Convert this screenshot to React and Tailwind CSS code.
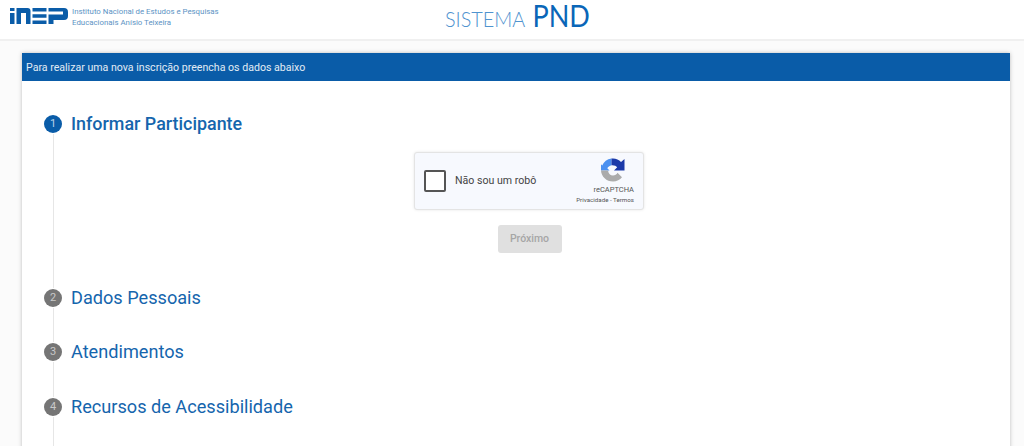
import { useState } from "react";

function InepLogo() {
  return (
    <svg width="58" height="16" viewBox="0 0 58 16" className="block" fill="#0a5ca8">
      <rect x="0" y="0" width="4.500" height="3" />
      <rect x="0" y="5" width="4.500" height="11" />
      <path d="M6.500 0h11a3 3 0 0 1 3 3v13h-4.500V5h-5v11H6.500z" />
      <path d="M22.500 0h14v3.500h-14zM22.500 6.300h14v3.400h-14zM22.500 12.500h14V16h-14z" />
      <path d="M38.500 0h15.500a4 4 0 0 1 4 4v4a4 4 0 0 1-4 4H43.500v4h-5V6.500h14.500v-3H38.500z" />
    </svg>
  );
}

function RecaptchaLogo() {
  return (
    <svg width="24" height="24" viewBox="0 0 24 24" className="block">
      <path d="M10.500 0.500C6 1.200 2.800 3.800 1.200 7.500L0 6.300V12.500h8.500L6.300 10.300c.8-1.400 2.200-2.600 4.200-3z" fill="#4a90f0" />
      <path d="M10.500 0.500h1.500c3.200 0 6 1.300 8 3.500L23.500 1v11.500H13l3.200-3.200c-1.200-1.500-3.200-2.300-5.700-2z" fill="#1c3aa9" />
      <path d="M0 12.500c0.300 6.200 5.500 11 12 11 3.800 0 7-1.500 9-4.200l-4.500-4.500c-1 1.700-2.500 2.700-4.500 2.700-2.700 0-4.500-1.800-5-5z" fill="#ababab" />
    </svg>
  );
}

function StepTitle({ n, active, title }) {
  return (
    <div className="flex h-5 items-center gap-[9px]">
      <div className={`flex h-[18px] w-[18px] shrink-0 items-center justify-center rounded-full text-[11px] ${active ? "bg-[#0a5ca8] text-[#bcd3e8]" : "bg-[#757575] text-[#c9c9c9]"}`}>
        {n}
      </div>
      <h2 className={`leading-5 text-[#1565ad] ${active ? "text-[17.900px] font-medium" : "text-[18.150px] font-normal"}`}>{title}</h2>
    </div>
  );
}

export default function App() {
  const [checked, setChecked] = useState(false);
  const steps = [
    { n: 2, title: "Dados Pessoais" },
    { n: 3, title: "Atendimentos" },
    { n: 4, title: "Recursos de Acessibilidade" },
  ];

  return (
    <div className="h-[446px] overflow-hidden bg-[#fbfbfb] font-['Roboto',sans-serif]">
      <header className="relative flex h-[41px] items-start border-b-2 border-[#f0f0f0] bg-white">
        <div className="flex items-start gap-[4px] pl-[10px] pt-[6px]">
          <div className="pt-[2px]">
            <InepLogo />
          </div>
          <div className="text-[7.850px] leading-[11px] text-[#5c93c4]">
            <div>Instituto Nacional de Estudos e Pesquisas</div>
            <div>Educacionais Anísio Teixeira</div>
          </div>
        </div>
        <div className="absolute left-[445px] top-0 flex origin-left scale-x-[0.9] items-baseline gap-[8px] font-['Lato',sans-serif]">
          <span className="text-[22px] leading-[31px] font-light text-[#4f93cf]">SISTEMA</span>
          <span className="text-[30px] leading-[31px] text-[#0a66b8]">PND</span>
        </div>
      </header>

      <main className="ml-[22px] mr-[14px] mt-[12px] h-[500px] bg-white shadow-[0_0_4px_rgba(0,0,0,0.25)]">
        <div className="flex h-[28px] items-center bg-[#0a5ca8] pl-[4px] pt-[1px] text-[10.600px] text-[#e2ecf5]">
          Para realizar uma nova inscrição preencha os dados abaixo
        </div>

        <div className="pl-[22px] pt-[33px]">
          <StepTitle n={1} active title="Informar Participante" />
          <div className="ml-[9px] flex h-[153.900px] flex-col items-center border-l border-[#e6e6e6] pt-[18px]">
            <div className="flex flex-col items-center pr-[6px]">
              <div className="flex h-[58px] w-[230px] items-center rounded-[3px] border border-[#e4e4e4] bg-[#f7f9fe] pl-[9px] pr-[9px] shadow-[0_0_3px_rgba(0,0,0,0.1)]">
                <button
                  type="button"
                  onClick={() => setChecked(!checked)}
                  className="h-[22px] w-[22px] shrink-0 rounded-[2px] border-2 border-[#555555] bg-white"
                />
                <span className="ml-[9px] flex-1 text-[10.600px] text-[#444444]">Não sou um robô</span>
                <div className="flex flex-col items-end">
                  <div className="mr-[9px]">
                    <RecaptchaLogo />
                  </div>
                  <div className="mt-[3px] text-[7.500px] leading-[10px] text-[#555555]">reCAPTCHA</div>
                  <div className="mt-[1px] whitespace-nowrap text-[6.200px] leading-[9px] text-[#555555]">Privacidade - Termos</div>
                </div>
              </div>
              <button type="button" disabled className="ml-[1px] mt-[15px] h-[28px] w-[64px] rounded-[3px] bg-[#e0e0e0] text-[10.500px] font-medium text-[#a6a6a6]">
                Próximo
              </button>
            </div>
          </div>

          {steps.map((s) => (
            <div key={s.n}>
              <StepTitle n={s.n} title={s.title} />
              <div className="ml-[9px] h-[34.500px] border-l border-[#e6e6e6]" />
            </div>
          ))}
        </div>
      </main>
    </div>
  );
}
